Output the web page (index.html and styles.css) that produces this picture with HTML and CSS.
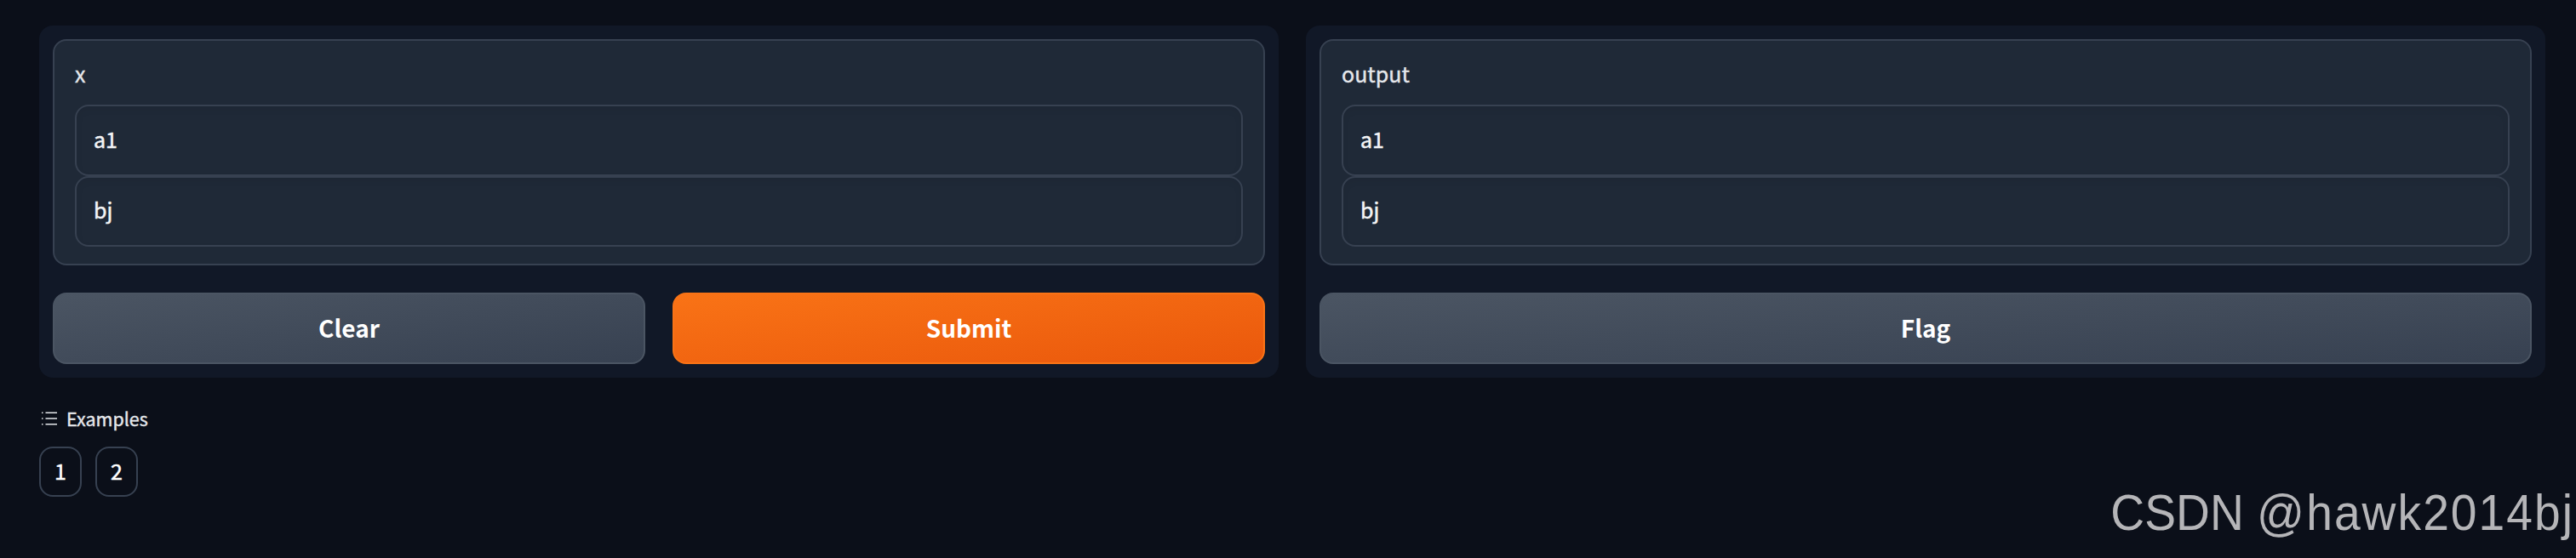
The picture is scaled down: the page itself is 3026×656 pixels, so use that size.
FILE: index.html
```html
<!DOCTYPE html>
<html lang="en">
<head>
    <meta charset="UTF-8">
    <meta name="viewport" content="width=device-width, initial-scale=1.0">
    <title>Gradio</title>
    <link rel="stylesheet" href="styles.css">
</head>
<body>
    <main class="container">
        <div class="row">
            <section class="panel">
                <div class="block">
                    <span class="label">x</span>
                    <input class="textbox" type="text" value="a1">
                    <input class="textbox" type="text" value="bj">
                </div>
                <div class="buttons">
                    <button class="btn secondary">Clear</button>
                    <button class="btn primary">Submit</button>
                </div>
            </section>
            <section class="panel">
                <div class="block">
                    <span class="label">output</span>
                    <input class="textbox" type="text" value="a1" readonly>
                    <input class="textbox" type="text" value="bj" readonly>
                </div>
                <div class="buttons">
                    <button class="btn secondary">Flag</button>
                </div>
            </section>
        </div>
        <div class="examples">
            <div class="examples-label">
                <svg class="list-icon" width="24" height="24" viewBox="0 0 32 32">
                    <path fill="currentColor" d="M10 6h18v2H10zm0 18h18v2H10zm0-9h18v2H10zm-6 0h2v2H4zm0-9h2v2H4zm0 18h2v2H4z"/>
                </svg>
                <span>Examples</span>
            </div>
            <div class="samples">
                <button class="sample">1</button>
                <button class="sample">2</button>
            </div>
        </div>
    </main>
    <div class="watermark">CSDN <span class="handle">@hawk2014bj</span></div>
</body>
</html>
```
FILE: styles.css
```css
* {
    box-sizing: border-box;
}
body {
    margin: 0;
    height: 656px;
    overflow: hidden;
    background-color: #0b0f19;
    color: #fff;
    font-family: "Noto Sans CJK SC", "Noto Sans", sans-serif;
}
button, input {
    font-family: inherit;
    color: inherit;
    margin: 0;
}
.container {
    padding: 30px 36px 0 46px;
}
.row {
    display: flex;
    gap: 32px;
}
.panel {
    flex: 1;
    display: flex;
    flex-direction: column;
    gap: 32px;
    height: 414px;
    padding: 16px;
    border-radius: 16px;
    background: #111827;
}
.block {
    display: flex;
    flex-direction: column;
    height: 266px;
    padding: 24px 24px 20px;
    border: 2px solid #374151;
    border-radius: 16px;
    background: #1f2937;
}
.label {
    flex-shrink: 0;
    height: 51px;
    line-height: 28px;
    font-size: 25px;
    color: #e5e7eb;
    -webkit-text-stroke: 0.4px;
}
.textbox {
    flex-shrink: 0;
    height: 83.5px;
    padding: 0 20px 4px;
    border: 2px solid #374151;
    border-radius: 16px;
    background: #1f2937;
    box-shadow: inset 0 4px 8px rgba(0, 0, 0, 0.05);
    color: #f3f4f6;
    font-size: 25px;
    outline: none;
    -webkit-text-stroke: 0.5px;
}
.buttons {
    display: flex;
    gap: 32px;
}
.btn {
    flex: 1;
    height: 84px;
    padding: 0 0 3px;
    border: 2px solid #4b5563;
    border-radius: 16px;
    font-size: 28px;
    font-weight: 700;
}
.secondary {
    background: linear-gradient(to bottom right, #4b5563, #374151);
}
.primary {
    border-color: #f97316;
    background: linear-gradient(to bottom right, #f97316, #ea580c);
}
.examples {
    padding-top: 32px;
}
.examples-label {
    display: flex;
    align-items: center;
    height: 32px;
    margin-bottom: 17px;
    gap: 8px;
    font-size: 21.5px;
    color: #e5e7eb;
    -webkit-text-stroke: 0.4px;
}
.examples-label span {
    padding-bottom: 2px;
}
.list-icon {
    stroke: none;
}
.samples {
    display: flex;
    gap: 16px;
}
.sample {
    width: 50px;
    height: 59px;
    padding: 0 0 3px;
    border: 2px solid #374151;
    border-radius: 16px;
    background: none;
    font-size: 25px;
    -webkit-text-stroke: 0.5px;
}
.watermark {
    position: absolute;
    right: 2px;
    bottom: 15px;
    line-height: 76px;
    font-family: "Liberation Sans", Arial, sans-serif;
    font-size: 60px;
    white-space: nowrap;
    color: #b5b5b8;
    transform: scaleX(0.92);
    transform-origin: right;
}
.handle {
    letter-spacing: 2.2px;
}
```
